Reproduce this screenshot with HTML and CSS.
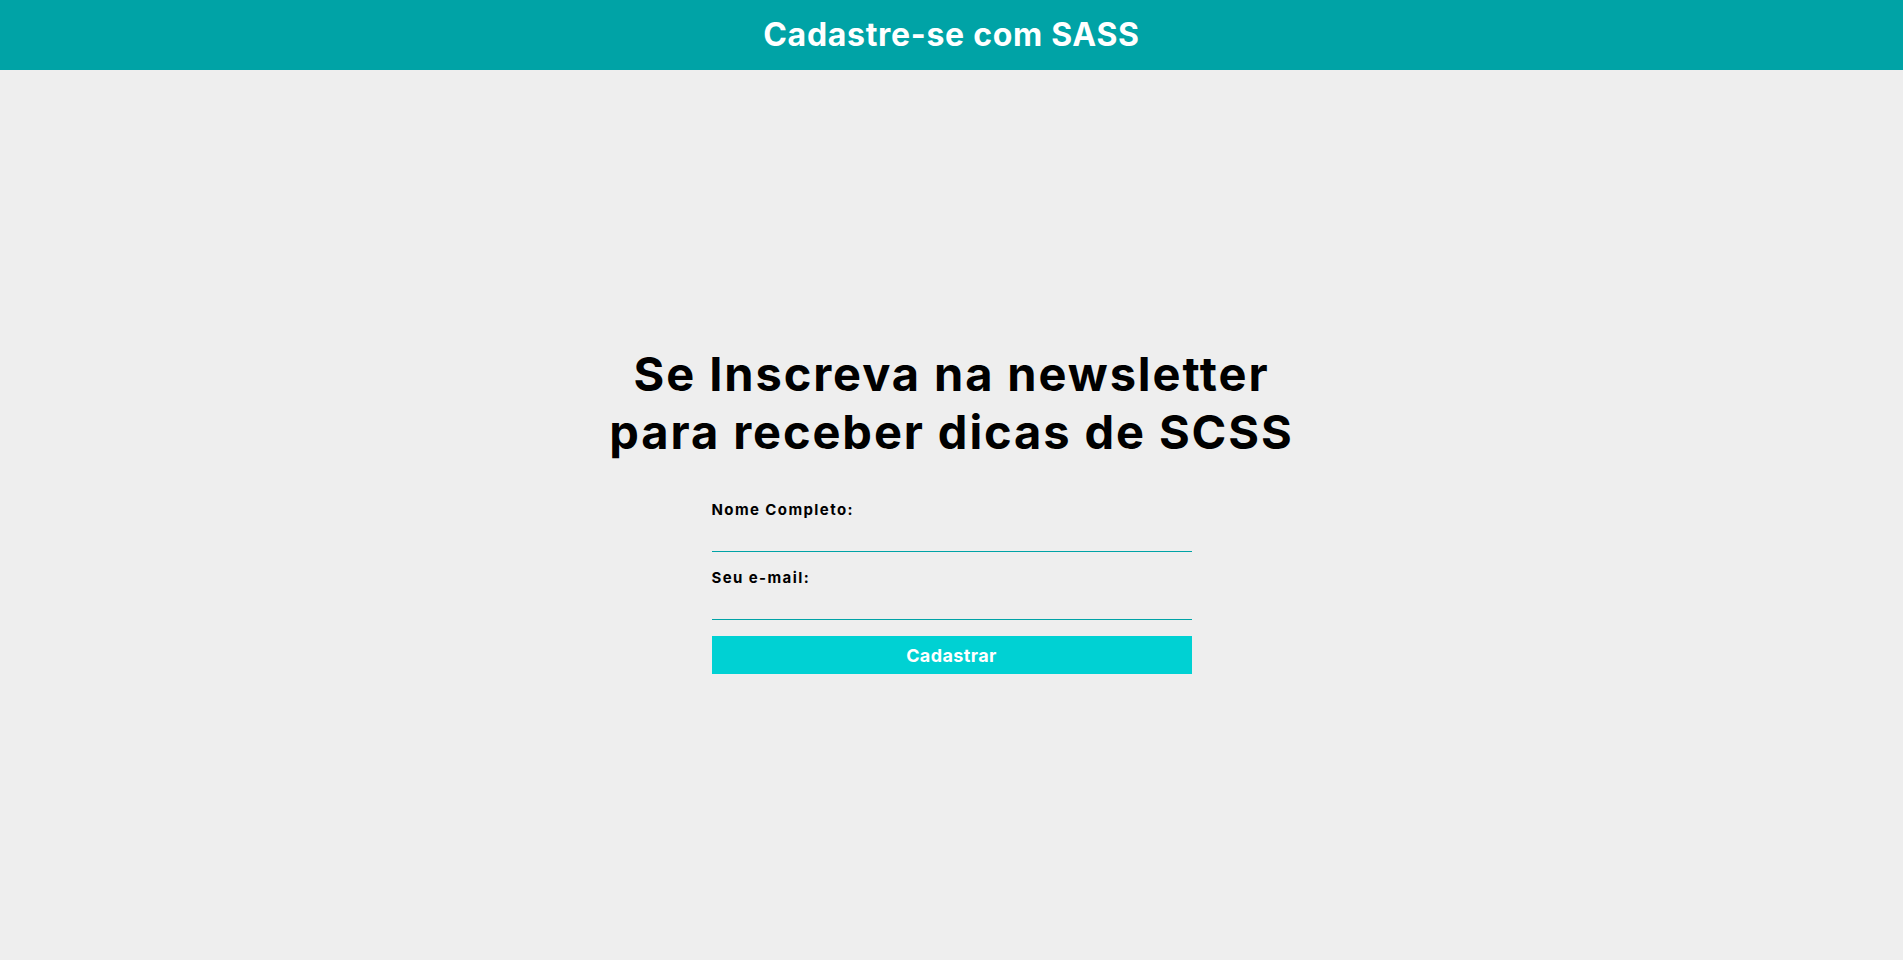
FILE: index.html
```html
<!DOCTYPE html>
<html lang="pt-BR">
<head>
<meta charset="utf-8">
<title>Cadastre-se com SASS</title>
<link rel="stylesheet" href="styles.css">
</head>
<body>
<header class="topbar">
  <h2 class="topbar-title">Cadastre-se com SASS</h2>
</header>
<main class="main">
  <section class="newsletter">
    <h1 class="newsletter-title">Se Inscreva na newsletter para receber dicas de SCSS</h1>
    <form class="form">
      <label class="form-label" for="nome">Nome Completo:</label>
      <input class="form-input" id="nome" type="text">
      <label class="form-label" for="email">Seu e-mail:</label>
      <input class="form-input" id="email" type="email">
      <button class="form-button" type="button">Cadastrar</button>
    </form>
  </section>
</main>
</body>
</html>
```
FILE: styles.css
```css
* { box-sizing: border-box; }
html, body { margin: 0; padding: 0; }
body {
  background: #eeeeee;
  font-family: "Inter", "Open Sans", sans-serif;
  color: #000;
}
.topbar {
  height: 70px;
  background: #00a3a6;
  display: flex;
  align-items: center;
  justify-content: center;
}
.topbar-title {
  margin: 0;
  color: #fff;
  font-size: 32px;
  font-weight: 700;
  line-height: 40px;
  letter-spacing: 0.7px;
}
.main {
  min-height: 890px;
  padding-bottom: 11px;
  display: flex;
  align-items: center;
  justify-content: center;
}
.newsletter {
  display: flex;
  flex-direction: column;
  align-items: center;
}
.newsletter-title {
  margin: 0 0 39px;
  width: 720px;
  text-align: center;
  font-size: 47px;
  line-height: 58px;
  font-weight: 700;
  letter-spacing: 1.9px;
}
.form {
  width: 480px;
  display: flex;
  flex-direction: column;
}
.form-label {
  font-size: 15px;
  font-weight: 700;
  line-height: 20px;
  letter-spacing: 1.4px;
}
.form-input {
  height: 32px;
  border: none;
  border-bottom: 1px solid #00a3a6;
  background: transparent;
  margin-bottom: 16px;
  outline: none;
  font-size: 16px;
}
.form-button {
  height: 38px;
  border: none;
  background: #00d1d3;
  color: #fff;
  font-family: inherit;
  font-size: 18px;
  font-weight: 700;
  letter-spacing: 0.4px;
}
```
